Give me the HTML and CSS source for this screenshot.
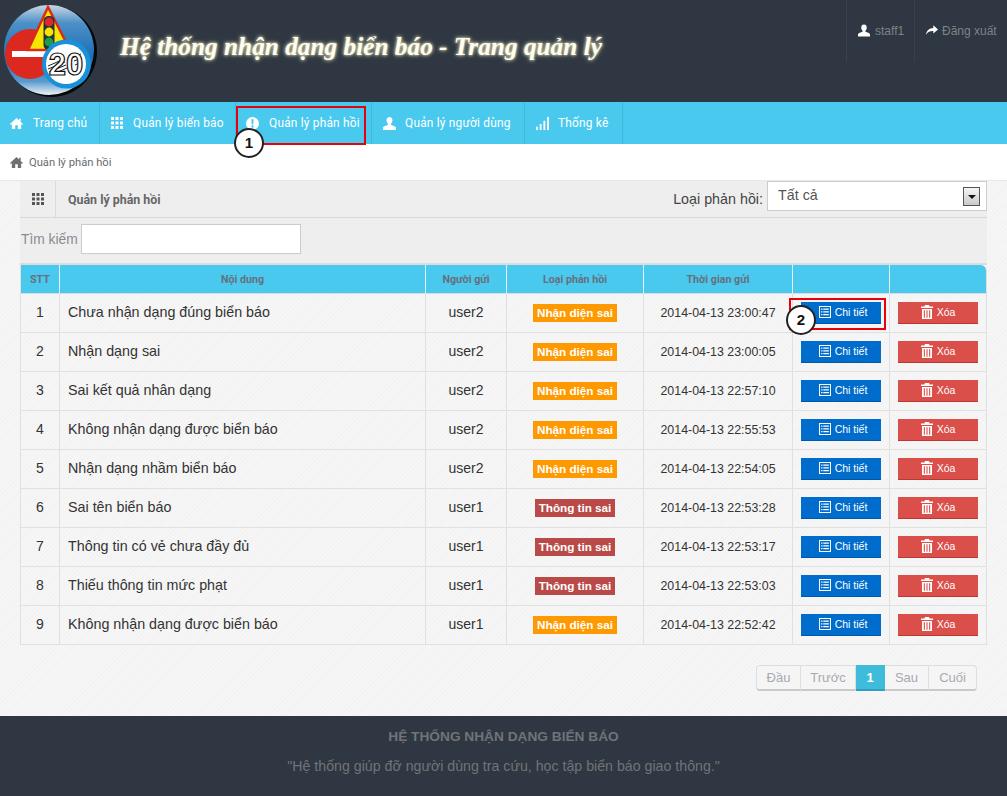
FILE: index.html
```html
<!DOCTYPE html>
<html lang="vi">
<head>
<meta charset="utf-8">
<title>Quản lý phản hồi</title>
<link rel="stylesheet" href="styles.css">
</head>
<body>
<svg class="defs" width="0" height="0">
  <symbol id="i-home" viewBox="0 0 14 14"><path d="M7 1 0 7.600l.9 1L2 7.600V13h3.600V9h2.800v4H12V7.600l1.100 1 .9-1L11.500 5.300V2H9.800v1.700z"/></symbol>
  <symbol id="i-grid" viewBox="0 0 12 12"><path d="M0 0h3v3H0zM4.500 0h3v3h-3zM9 0h3v3H9zM0 4.500h3v3H0zM4.500 4.500h3v3h-3zM9 4.500h3v3H9zM0 9h3v3H0zM4.500 9h3v3h-3zM9 9h3v3H9z"/></symbol>
  <symbol id="i-alert" viewBox="0 0 14 14"><path fill-rule="evenodd" d="M7 0a7 7 0 1 0 0 14A7 7 0 0 0 7 0zM5.800 2.500h2.400L7.800 8H6.200zM7 9a1.300 1.300 0 1 1 0 2.600A1.300 1.300 0 0 1 7 9z"/></symbol>
  <symbol id="i-user" viewBox="0 0 14 14"><path d="M7 0c2 0 3.200 1.400 3.200 3.500 0 1.600-.7 3-1.500 3.800v1.300c1.800.6 5.300 1.500 5.300 3V14H0v-2.400c0-1.500 3.500-2.400 5.300-3V7.300C4.500 6.500 3.800 5.100 3.800 3.500 3.800 1.400 5 0 7 0z"/></symbol>
  <symbol id="i-signal" viewBox="0 0 14 14"><path d="M0 10.500h2V14H0zM4 7.500h2V14H4zM8 4h2v10H8zM12 0h2v14h-2z"/></symbol>
  <symbol id="i-share" viewBox="0 0 14 12"><path d="M8.500 0 14 4.800 8.500 9.500V6.600C4.500 6.500 2 7.600 0 11 .4 6.500 3.500 3.200 8.500 3z"/></symbol>
  <symbol id="i-list" viewBox="0 0 14 14"><path fill-rule="evenodd" d="M0 0h14v14H0zM1.200 1.200v11.600h11.600V1.200zM2.500 3h1.600v1.500H2.500zM5 3h6.500v1.500H5zM2.500 6.200h1.600v1.500H2.500zM5 6.200h6.500v1.500H5zM2.500 9.400h1.600v1.500H2.500zM5 9.400h6.500v1.500H5z"/></symbol>
  <symbol id="i-trash" viewBox="0 0 12 14"><path fill-rule="evenodd" d="M4 0h4l.6 1.500H12V3H0V1.500h3.400zM1 4h10v10H1zM2.800 5.200v7.600h1.100V5.200zM5.450 5.200v7.600h1.100V5.200zM8.100 5.200v7.600h1.100V5.200z"/></symbol>
</svg>

<header class="top">
  <svg class="logo" viewBox="0 0 96 96" width="96" height="96">
    <defs>
      <linearGradient id="ball" x1="0" y1="0" x2="0" y2="1"><stop offset="0" stop-color="#c9d8e6"/><stop offset=".2" stop-color="#4c90c8"/><stop offset=".6" stop-color="#1b6db5"/><stop offset=".85" stop-color="#5a9ccf"/><stop offset="1" stop-color="#eef3f7"/></linearGradient>
    </defs>
    <circle cx="48.500" cy="48.500" r="45.500" fill="#050708"/>
    <circle cx="46" cy="47" r="45" fill="url(#ball)"/>
    <circle cx="27" cy="51" r="25" fill="#dc281e"/>
    <rect x="9" y="48" width="36" height="6" fill="#fff"/>
    <path d="M45 4 67 47H25z" fill="#f6e500" stroke="#dc281e" stroke-width="2.500"/>
    <rect x="40.500" y="13" width="11" height="34" rx="5" fill="#27323a"/>
    <circle cx="46" cy="19" r="4.400" fill="#e1262c"/>
    <circle cx="46" cy="29" r="4.400" fill="#f6e500"/>
    <circle cx="46" cy="39" r="4.400" fill="#1d9c4c"/>
    <circle cx="63.500" cy="61" r="24.500" fill="#1990d8"/>
    <circle cx="63" cy="61" r="20" fill="#fff"/>
    <path d="M45 63l16-7M45 66l17-7M46 69l17-7M48 72l16-7M69 55l9-4M71 58l8-3M72 62l7-3" stroke="#222" stroke-width="1" fill="none"/>
    <text class="logo-num" x="63" y="72" text-anchor="middle">20</text>
  </svg>
  <h1 class="site-title">Hệ thống nhận dạng biển báo - Trang quản lý</h1>
  <nav class="account">
    <a class="account-item"><svg class="ico ico-w"><use href="#i-user"/></svg>staff1</a>
    <a class="account-item"><svg class="ico ico-w"><use href="#i-share"/></svg>Đăng xuất</a>
  </nav>
</header>

<nav class="menu">
  <a class="menu-item"><svg class="ico ico-w"><use href="#i-home"/></svg>Trang chủ</a>
  <a class="menu-item"><svg class="ico ico-w"><use href="#i-grid"/></svg>Quản lý biển báo</a>
  <a class="menu-item marked"><svg class="ico ico-w"><use href="#i-alert"/></svg>Quản lý phản hồi<span class="step step-1">1</span></a>
  <a class="menu-item"><svg class="ico ico-w"><use href="#i-user"/></svg>Quản lý người dùng</a>
  <a class="menu-item"><svg class="ico ico-w"><use href="#i-signal"/></svg>Thống kê</a>
</nav>

<div class="crumb"><svg class="ico ico-g"><use href="#i-home"/></svg>Quản lý phản hồi</div>

<main class="content">
  <section class="panel">
    <div class="panel-head">
      <div class="panel-icon"><svg class="ico ico-d"><use href="#i-grid"/></svg></div>
      <h2 class="panel-title">Quản lý phản hồi</h2>
      <label class="filter">Loại phản hồi:
        <span class="select">Tất cả<span class="select-btn"><span class="caret"></span></span></span>
      </label>
    </div>
    <div class="search"><span class="search-label">Tìm kiếm</span><input class="search-input" type="text" aria-label="Tìm kiếm"></div>
    <table class="grid">
      <colgroup><col class="c1"><col class="c2"><col class="c3"><col class="c4"><col class="c5"><col class="c6"><col class="c7"></colgroup>
      <thead><tr><th>STT</th><th>Nội dung</th><th>Người gửi</th><th>Loại phản hồi</th><th>Thời gian gửi</th><th></th><th></th></tr></thead>
      <tbody>
        <tr><td class="num">1</td><td class="text">Chưa nhận dạng đúng biển báo</td><td class="mid">user2</td><td class="mid"><span class="tag orange">Nhận diện sai</span></td><td class="mid">2014-04-13 23:00:47</td><td class="mid act"><a class="btn blue marked-btn"><svg class="ico ico-w"><use href="#i-list"/></svg>Chi tiết<span class="step step-2">2</span></a></td><td class="mid act"><a class="btn red"><svg class="ico ico-w ico-trash"><use href="#i-trash"/></svg>Xóa</a></td></tr>
        <tr><td class="num">2</td><td class="text">Nhận dạng sai</td><td class="mid">user2</td><td class="mid"><span class="tag orange">Nhận diện sai</span></td><td class="mid">2014-04-13 23:00:05</td><td class="mid act"><a class="btn blue"><svg class="ico ico-w"><use href="#i-list"/></svg>Chi tiết</a></td><td class="mid act"><a class="btn red"><svg class="ico ico-w ico-trash"><use href="#i-trash"/></svg>Xóa</a></td></tr>
        <tr><td class="num">3</td><td class="text">Sai kết quả nhân dạng</td><td class="mid">user2</td><td class="mid"><span class="tag orange">Nhận diện sai</span></td><td class="mid">2014-04-13 22:57:10</td><td class="mid act"><a class="btn blue"><svg class="ico ico-w"><use href="#i-list"/></svg>Chi tiết</a></td><td class="mid act"><a class="btn red"><svg class="ico ico-w ico-trash"><use href="#i-trash"/></svg>Xóa</a></td></tr>
        <tr><td class="num">4</td><td class="text">Không nhận dạng được biển báo</td><td class="mid">user2</td><td class="mid"><span class="tag orange">Nhận diện sai</span></td><td class="mid">2014-04-13 22:55:53</td><td class="mid act"><a class="btn blue"><svg class="ico ico-w"><use href="#i-list"/></svg>Chi tiết</a></td><td class="mid act"><a class="btn red"><svg class="ico ico-w ico-trash"><use href="#i-trash"/></svg>Xóa</a></td></tr>
        <tr><td class="num">5</td><td class="text">Nhận dạng nhầm biển báo</td><td class="mid">user2</td><td class="mid"><span class="tag orange">Nhận diện sai</span></td><td class="mid">2014-04-13 22:54:05</td><td class="mid act"><a class="btn blue"><svg class="ico ico-w"><use href="#i-list"/></svg>Chi tiết</a></td><td class="mid act"><a class="btn red"><svg class="ico ico-w ico-trash"><use href="#i-trash"/></svg>Xóa</a></td></tr>
        <tr><td class="num">6</td><td class="text">Sai tên biển báo</td><td class="mid">user1</td><td class="mid"><span class="tag crimson">Thông tin sai</span></td><td class="mid">2014-04-13 22:53:28</td><td class="mid act"><a class="btn blue"><svg class="ico ico-w"><use href="#i-list"/></svg>Chi tiết</a></td><td class="mid act"><a class="btn red"><svg class="ico ico-w ico-trash"><use href="#i-trash"/></svg>Xóa</a></td></tr>
        <tr><td class="num">7</td><td class="text">Thông tin có vẻ chưa đầy đủ</td><td class="mid">user1</td><td class="mid"><span class="tag crimson">Thông tin sai</span></td><td class="mid">2014-04-13 22:53:17</td><td class="mid act"><a class="btn blue"><svg class="ico ico-w"><use href="#i-list"/></svg>Chi tiết</a></td><td class="mid act"><a class="btn red"><svg class="ico ico-w ico-trash"><use href="#i-trash"/></svg>Xóa</a></td></tr>
        <tr><td class="num">8</td><td class="text">Thiếu thông tin mức phạt</td><td class="mid">user1</td><td class="mid"><span class="tag crimson">Thông tin sai</span></td><td class="mid">2014-04-13 22:53:03</td><td class="mid act"><a class="btn blue"><svg class="ico ico-w"><use href="#i-list"/></svg>Chi tiết</a></td><td class="mid act"><a class="btn red"><svg class="ico ico-w ico-trash"><use href="#i-trash"/></svg>Xóa</a></td></tr>
        <tr><td class="num">9</td><td class="text">Không nhận dạng được biển báo</td><td class="mid">user1</td><td class="mid"><span class="tag orange">Nhận diện sai</span></td><td class="mid">2014-04-13 22:52:42</td><td class="mid act"><a class="btn blue"><svg class="ico ico-w"><use href="#i-list"/></svg>Chi tiết</a></td><td class="mid act"><a class="btn red"><svg class="ico ico-w ico-trash"><use href="#i-trash"/></svg>Xóa</a></td></tr>
      </tbody>
    </table>
    <div class="pager">
      <a class="page">Đầu</a><a class="page">Trước</a><a class="page current">1</a><a class="page">Sau</a><a class="page">Cuối</a>
    </div>
  </section>
</main>

<footer class="foot">
  <p class="foot-title">HỆ THỐNG NHẬN DẠNG BIỂN BÁO</p>
  <p class="foot-quote">"Hệ thống giúp đỡ người dùng tra cứu, học tập biển báo giao thông."</p>
</footer>
</body>
</html>
```
FILE: styles.css
```css
*, *::before, *::after { box-sizing: border-box; }
html, body { margin: 0; padding: 0; }
body {
  font-family: "Liberation Sans", Arial, sans-serif;
  font-size: 14px;
  color: #333;
  background: #f5f5f5;
}
.defs { position: absolute; }
.ico { display: inline-block; flex: none; }
.ico-w { fill: #fff; }
.ico-g { fill: #6f6f6f; }
.ico-d { fill: #555; }

.top {
  height: 102px;
  background: #2f3742;
  display: flex;
  align-items: flex-start;
}
.logo { margin: 3px 0 0 3px; flex: none; }
.logo-num {
  font-family: "Liberation Sans", sans-serif;
  font-weight: 700;
  font-size: 31px;
  fill: #fff;
  stroke: #111;
  stroke-width: 1.200px;
}
.site-title {
  margin: 30px 0 0 21px;
  font-family: "Liberation Serif", serif;
  font-style: italic;
  font-weight: 700;
  font-size: 25.300px;
  line-height: 32px;
  color: #fdfdf0;
  text-shadow: 0 0 3px #f4f0c8, 0 0 5px #b8b490;
  white-space: nowrap;
}
.account { margin-left: auto; display: flex; height: 62px; }
.account-item {
  display: flex;
  align-items: flex-start;
  padding: 24px 0 0 11px;
  border-left: 1px solid #3a424d;
  color: #7d8388;
  font-size: 12px;
  line-height: 15px;
}
.account-item .ico { width: 12px; height: 13px; margin: 0 4px 0 0; }
.account-item:first-child { width: 68px; }
.account-item:first-child .ico { margin-right: 5px; }
.account-item:last-child { width: 93px; }

.menu {
  height: 42px;
  background: #4ac9ef;
  display: flex;
}
.menu-item {
  position: relative;
  display: flex;
  align-items: center;
  padding: 0 0 0 10px;
  border-right: 1px solid #3fb9de;
  color: #fff;
  font-family: Roboto, "Liberation Sans", sans-serif;
  font-size: 11.900px;
  letter-spacing: .2px;
  white-space: nowrap;
}
.menu-item .ico { width: 13px; height: 13px; margin-right: 10px; }
.menu-item:nth-child(1) { width: 100px; }
.menu-item:nth-child(2) { width: 136px; padding-left: 11px; }
.menu-item:nth-child(2) .ico { width: 12px; height: 12px; }
.menu-item:nth-child(3) { width: 136px; }
.menu-item:nth-child(4) { width: 153px; padding-left: 11px; }
.menu-item:nth-child(4) .ico { margin-right: 9px; }
.menu-item:nth-child(5) { width: 98px; padding-left: 11px; }
.menu-item:nth-child(5) .ico { margin-right: 9px; }
.marked::after {
  content: "";
  position: absolute;
  left: 0; top: 4px;
  width: 130px; height: 39px;
  border: 2px solid #e8000d;
}
.step {
  position: absolute;
  width: 30px; height: 30px;
  border: 2px solid #222;
  border-radius: 50%;
  background: #fff;
  color: #111;
  font: 700 15px/26px "Liberation Sans", sans-serif;
  text-align: center;
  letter-spacing: 0;
  z-index: 2;
}
.step-1 { left: -2px; top: 26px; }
.step-2 { left: -15px; top: 3px; }

.crumb {
  height: 37px;
  background: #fff;
  display: flex;
  align-items: center;
  padding: 1px 0 0 10px;
  font-family: Roboto, "Liberation Sans", sans-serif;
  font-size: 11.200px;
  color: #6b6b6b;
  border-bottom: 1px solid #e8e8e8;
}
.crumb .ico { width: 13px; height: 13px; margin-right: 6px; }

.content {
  height: 535px;
  padding: 0 20px;
  background-color: #f5f5f5;
  background-image: repeating-linear-gradient(135deg, #f2f2f2 0 1px, #f6f6f6 1px 3px);
}
.panel { width: 967px; }
.panel-head {
  height: 37px;
  background: #eee;
  border-bottom: 1px solid #d8d8d8;
  display: flex;
  align-items: stretch;
}
.panel-icon {
  width: 36px;
  border-right: 1px solid #dcdcdc;
  display: flex;
  align-items: center;
  justify-content: center;
}
.panel-icon .ico { width: 12px; height: 12px; }
.panel-title {
  margin: 1px 0 0 12px;
  font-family: Roboto, "Liberation Sans", sans-serif;
  font-size: 12.400px;
  font-weight: 700;
  color: #666;
  line-height: 36px;
}
.filter {
  margin-left: auto;
  display: flex;
  align-items: flex-start;
  color: #444;
  font-size: 14.300px;
  line-height: 36px;
}
.select {
  position: relative;
  display: block;
  width: 220px;
  height: 30px;
  margin: 0 0 0 4px;
  background: #fff;
  border: 1px solid #ccc;
  padding-left: 10px;
  line-height: 26px;
  color: #555;
}
.select-btn {
  position: absolute;
  right: 6px; top: 5px;
  width: 17px; height: 19px;
  border: 1px solid #555;
  background: linear-gradient(#f5f5f5, #c9c9c9);
  display: flex;
  align-items: center;
  justify-content: center;
}
.caret {
  width: 0; height: 0;
  border: 4px solid transparent;
  border-top: 4px solid #111;
  border-bottom: 0;
}
.search {
  height: 47px;
  background: #eee;
  border-bottom: 2px solid #dcdcdc;
  display: flex;
  align-items: center;
  padding: 0 0 3px 1px;
  color: #8a8a92;
}
.search-label { font-size: 13.800px; width: 60px; }
.search-input {
  width: 220px; height: 30px;
  border: 1px solid #ccc;
  background: #fff;
  margin: 0;
}
.grid {
  width: 967px;
  table-layout: fixed;
  border-collapse: separate;
  border-spacing: 0;
  border-left: 1px solid #e0e0e0;
}
.c1 { width: 39px; }
.c2 { width: 366px; }
.c3 { width: 81px; }
.c4 { width: 137px; }
.c5 { width: 149px; }
.c6 { width: 97px; }
.c7 { width: 97px; }
.grid th {
  height: 29px;
  background: #4ac9ef;
  color: #66707c;
  font-family: Roboto, "Liberation Sans", sans-serif;
  font-size: 10.700px;
  font-weight: 700;
  border-right: 1px solid #e6f6fb;
  border-bottom: 1px solid #dcdcdc;
  padding: 0;
}
.grid th:last-child { border-top-right-radius: 6px; border-right-color: #e0e0e0; }
.grid td {
  height: 39px;
  padding: 0 0 3px 8px;
  border-right: 1px solid #e0e0e0;
  border-bottom: 1px solid #e0e0e0;
  color: #333;
  font-size: 14px;
}
.grid td.text { font-size: 14.300px; }
.grid td.num, .grid td.mid { text-align: center; padding-left: 0; padding-right: 0; }
.grid td.act { padding-bottom: 1px; padding-top: 0; }
.grid td:nth-child(5) { font-size: 12.400px; padding-bottom: 1px; }
.tag {
  display: inline-block;
  height: 18px;
  padding: 0 4px;
  margin-top: 3px;
  font-size: 11.700px;
  font-weight: 700;
  line-height: 18px;
  color: #fff;
  vertical-align: middle;
}
.orange { background: #ff9900; }
.crimson { background: #b94a48; }
.btn {
  position: relative;
  display: inline-flex;
  align-items: center;
  justify-content: center;
  width: 80px; height: 22px;
  color: #fff;
  font-size: 10.500px;
  vertical-align: middle;
}
.btn .ico { width: 12px; height: 12px; margin-right: 4px; }
.btn .ico-trash { height: 14px; }
.blue { background: #006dcc; border-bottom: 1px solid #0058a8; padding-left: 4px; }
.red { background: #da4f49; border-bottom: 1px solid #bd362f; }
.marked-btn::after {
  content: "";
  position: absolute;
  left: -12px; top: -4px;
  width: 97px; height: 32px;
  border: 2px solid #e8000d;
}
.pager {
  display: flex;
  justify-content: flex-end;
  margin: 20px 10px 0 0;
}
.page {
  height: 26px;
  padding: 0;
  text-align: center;
  background: #f5f5f5;
  border: 1px solid #dedede;
  border-bottom: 2px solid #c9c9c9;
  border-left-width: 0;
  color: #a9a9b2;
  font-size: 13px;
  line-height: 23px;
}
.page:nth-child(1) { width: 45px; }
.page:nth-child(2) { width: 55px; }
.page:nth-child(3) { width: 29px; }
.page:nth-child(4) { width: 44px; }
.page:nth-child(5) { width: 48px; }
.page:first-child { border-left-width: 1px; border-radius: 4px 0 0 4px; }
.page:last-child { border-radius: 0 4px 4px 0; }
.current {
  background: #3fbcdc;
  border-color: #3fbcdc;
  border-bottom-color: #2f9fc0;
  color: #fff;
  font-weight: 700;
}
.foot {
  height: 80px;
  background: #2f3742;
  text-align: center;
  color: #6f7478;
  overflow: hidden;
}
.foot-title { margin: 13px 0 0; font-size: 13.700px; font-weight: 700; line-height: 16px; }
.foot-quote { margin: 13px 0 0; font-size: 14.200px; line-height: 16px; }
```
